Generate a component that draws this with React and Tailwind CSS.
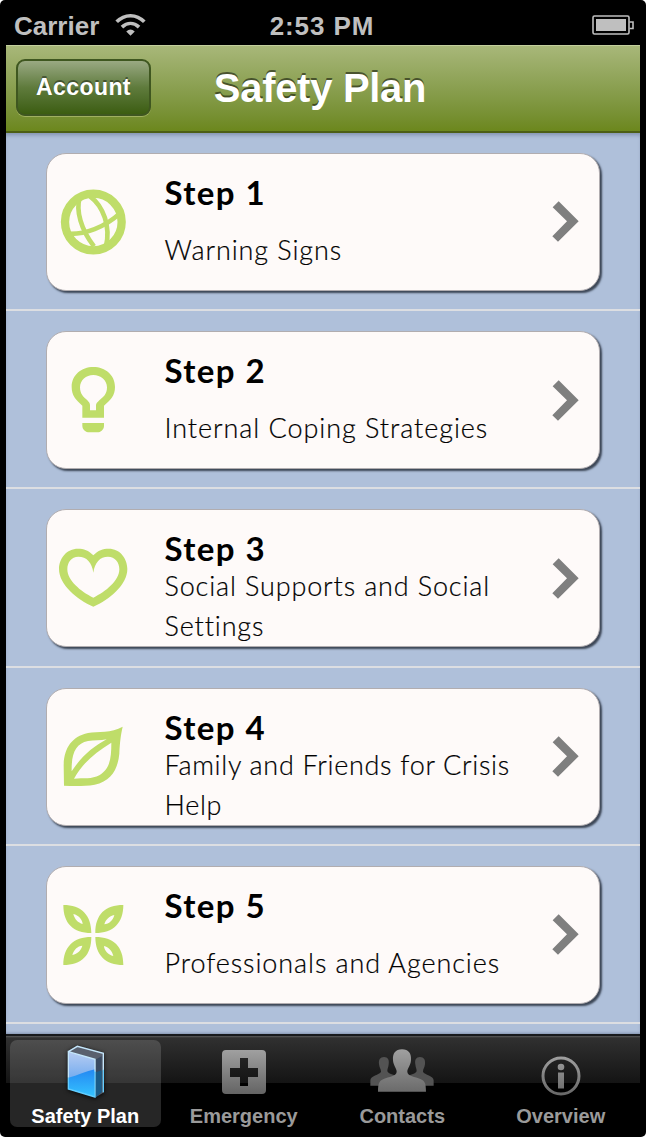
import React from "react";

const steps = [
  { title: "Step 1", text: "Warning Signs", icon: GlobeIcon, tracking: "tracking-[0.9px]" },
  { title: "Step 2", text: "Internal Coping Strategies", icon: BulbIcon, tracking: "tracking-[0.94px]" },
  { title: "Step 3", text: "Social Supports and Social Settings", icon: HeartIcon, tracking: "tracking-[0.86px]" },
  { title: "Step 4", text: "Family and Friends for Crisis Help", icon: LeafIcon, tracking: "tracking-[0.7px]" },
  { title: "Step 5", text: "Professionals and Agencies", icon: FlowerIcon, tracking: "tracking-[0.9px]" },
];

const tabs = [
  { label: "Safety Plan", icon: BookIcon, active: true, iconBox: "pt-[5px] pl-px" },
  { label: "Emergency", icon: CrossIcon, iconBox: "pt-[3px]" },
  { label: "Contacts", icon: PeopleIcon, iconBox: "pt-[2px]" },
  { label: "Overview", icon: InfoIcon, iconBox: "pt-[11px]" },
];

function GlobeIcon() {
  return (
    <svg viewBox="0 0 210 210" className="size-[70px]" fill="none" stroke="#bfdd69">
      <circle cx="106" cy="105" r="85" strokeWidth="25" />
      <g strokeWidth="14">
        <path d="M66 30C52 70 70 130 108 178" />
        <path d="M96 28C137 58 158 120 144 178" />
        <path d="M24 140C80 145 142 120 188 77" />
      </g>
    </svg>
  );
}

function BulbIcon() {
  return (
    <svg viewBox="0 0 210 210" className="size-[70px]" fill="#bfdd69" fillRule="evenodd">
      <path d="M106 6C142 6 171 30 171 66C171 92 158 105 138 122V158H73V122C54 105 41 92 41 66C41 30 70 6 106 6ZM106 30C84 30 66 46 66 67C66 88 78 97 88 106C94 112 96 116 96 121V136H114V121C114 116 118 112 124 106C136 96 147 88 147 67C147 46 128 30 106 30Z" />
      <path d="M73 174H138V182C138 194 128 202 118 202H94C83 202 73 194 73 182Z" />
    </svg>
  );
}

function HeartIcon() {
  return (
    <svg viewBox="0 0 210 210" className="size-[70px]" fill="#bfdd69" fillRule="evenodd">
      <path d="M106 37C120 22 135 17 152 17C186 17 208 46 208 78C208 125 155 170 106 191C57 170 3 125 3 78C3 46 26 17 60 17C77 17 92 22 106 37ZM106 89C102 58 86 41 61 41C40 41 28 58 28 79C28 112 68 146 106 164C144 146 184 112 184 79C184 58 171 41 150 41C126 41 110 58 106 89Z" />
    </svg>
  );
}

function LeafIcon() {
  return (
    <svg viewBox="0 0 210 210" className="size-[70px]" fill="#bfdd69" fillRule="evenodd">
      <path d="M194 14C160 34 120 28 90 33C40 44 18 80 17 130L18 191C50 193 80 193 110 188C160 178 180 140 184 95C186 60 188 40 194 14ZM41 148C40 95 52 65 90 57C108 54 128 56 146 52C104 76 72 100 41 148ZM48 170C76 120 112 92 160 62C160 110 156 140 124 160C102 172 76 168 48 170Z" />
    </svg>
  );
}

function FlowerIcon() {
  const petal = "M16 15C70 15 100 45 100 99C45 99 16 70 16 15ZM46 42C62 46 73 58 74 72C60 68 50 58 46 42Z";
  return (
    <svg viewBox="0 0 210 210" className="size-[70px]" fill="#bfdd69" fillRule="evenodd">
      <path d={petal} />
      <path d={petal} transform="rotate(90 106 105)" />
      <path d={petal} transform="rotate(180 106 105)" />
      <path d={petal} transform="rotate(270 106 105)" />
    </svg>
  );
}

function BookIcon() {
  return (
    <svg viewBox="0 0 120 165" className="h-[55px] w-[40px] drop-shadow-[0_1px_2px_rgba(0,0,0,0.8)]">
      <defs>
        <linearGradient id="cover" x1="0" y1="0" x2="0" y2="1">
          <stop offset="0" stopColor="#b7ccf2" />
          <stop offset="0.55" stopColor="#78aeef" />
        </linearGradient>
        <linearGradient id="shine" x1="0" y1="0" x2="0" y2="1">
          <stop offset="0" stopColor="#2488f2" />
          <stop offset="1" stopColor="#35c4ff" />
        </linearGradient>
      </defs>
      <path d="M7 18L34 3L114 25V142L90 156L7 132Z" fill="#59606e" />
      <path d="M90 43L107 34V142L90 156Z" fill="#3a4a60" />
      <path d="M90 82L107 76V142L90 156Z" fill="#1a5c88" />
      <path d="M7 20L87 43V156L7 132Z" fill="url(#cover)" />
      <path d="M7 98C35 92 60 78 87 73V156L7 132Z" fill="url(#shine)" />
      <path d="M7 20L34 4L112 25V76M7 98V20L87 43V80" fill="none" stroke="#c4e6fb" strokeWidth="4" />
      <path d="M7 98V132L87 156V78M112 74V142" fill="none" stroke="#62cdff" strokeWidth="4" />
    </svg>
  );
}

function CrossIcon() {
  return (
    <svg viewBox="0 0 44 44" className="size-[44px]">
      <defs>
        <linearGradient id="cross" x1="0" y1="0" x2="0" y2="1">
          <stop offset="0" stopColor="#a0a0a0" />
          <stop offset="1" stopColor="#646464" />
        </linearGradient>
      </defs>
      <path fill="url(#cross)" fillRule="evenodd" d="M4 0H40Q44 0 44 4V40Q44 44 40 44H4Q0 44 0 40V4Q0 0 4 0ZM18 8V18H8V27H18V36H26V27H36V18H26V8Z" />
    </svg>
  );
}

function PeopleIcon() {
  return (
    <svg viewBox="0 0 192 130" className="h-[43.3px] w-[64px]">
      <defs>
        <linearGradient id="person" x1="0" y1="0" x2="0" y2="1">
          <stop offset="0" stopColor="#a0a0a0" />
          <stop offset="1" stopColor="#6b6b6b" />
        </linearGradient>
      </defs>
      <g fill="#535353">
        <path d="M42 24C54 24 58 33 56 46C55 56 52 60 52 66C54 75 70 76 80 82V110H1V94C1 80 28 78 33 68C33 60 28 56 27 46C25 33 30 24 42 24Z" />
        <path d="M150 24C138 24 134 33 136 46C137 56 140 60 140 66C138 75 122 76 112 82V110H191V94C191 80 164 78 159 68C159 60 164 56 165 46C167 33 162 24 150 24Z" />
      </g>
      <path d="M96 1C116 1 125 14 123 34C122 50 112 58 112 68C112 82 136 83 151 90C164 96 168 102 168 128H24C24 102 28 96 41 90C56 83 80 82 80 68C80 58 70 50 69 34C67 14 76 1 96 1Z" fill="url(#person)" />
    </svg>
  );
}

function InfoIcon() {
  return (
    <svg viewBox="0 0 40 40" className="size-[40px]">
      <defs>
        <linearGradient id="info" gradientUnits="userSpaceOnUse" x1="0" y1="0" x2="0" y2="40">
          <stop offset="0" stopColor="#a0a0a0" />
          <stop offset="1" stopColor="#666666" />
        </linearGradient>
      </defs>
      <circle cx="20" cy="20" r="18" fill="none" stroke="url(#info)" strokeWidth="3" />
      <circle cx="20" cy="11" r="3.3" fill="url(#info)" />
      <path d="M17 16.5H23V32.5H17Z" fill="url(#info)" />
    </svg>
  );
}

function StatusBar() {
  return (
    <div className="grid h-[45px] grid-cols-3 items-center pt-1.5 pr-3 pl-3.5 text-[26px] leading-none font-bold text-[#bfbfbf]">
      <div className="flex items-center gap-4">
        <span>Carrier</span>
        <svg viewBox="0 0 92 70" className="mb-0.5 h-[23px] w-[31px]" fill="none" stroke="#bfbfbf" strokeWidth="11">
          <path d="M4 27C28 2 64 2 88 27" />
          <path d="M20 43C36 28 56 28 72 43" />
          <path d="M46 69L33 56Q46 44 59 56Z" fill="#bfbfbf" stroke="none" />
        </svg>
      </div>
      <span className="-mr-1 -ml-2 text-center tracking-[0.9px]">2:53 PM</span>
      <svg viewBox="0 0 42 20" className="mb-0.5 h-[20px] w-[42px] justify-self-end">
        <rect x="1" y="1" width="36" height="18" rx="1.5" fill="none" stroke="#bfbfbf" strokeWidth="1.6" />
        <path d="M4 4H34V16H4Z" fill="#bfbfbf" />
        <path d="M37.5 7H41V13.5H37.5" fill="none" stroke="#bfbfbf" strokeWidth="1.6" />
      </svg>
    </div>
  );
}

function NavBar() {
  return (
    <div className="grid h-[87.75px] grid-cols-[135px_1fr_135px] items-center border-t border-b-2 border-t-[#c3cf9d] border-b-[#4c5e14] bg-linear-to-b from-[#a8b779] to-[#6c871c] px-[10px] text-white">
      <button className="mb-0.5 h-[57px] rounded-[9px] border-2 border-[#3f5720] bg-linear-to-b from-[#9aa983] via-[#5f7b3c] to-[#3c5d10] text-[23px] font-bold tracking-[0.4px] shadow-[0_1px_0_#a0b060] [text-shadow:0_-2px_0_rgba(0,0,0,0.4)]">
        Account
      </button>
      <h1 className="-ml-1.5 text-center text-[40px] leading-none font-bold tracking-[-0.3px] [text-shadow:0_-2px_0_rgba(0,0,0,0.5)]">
        Safety Plan
      </h1>
    </div>
  );
}

function StepRow({ step }) {
  const Icon = step.icon;
  return (
    <li className="h-[178.25px] border-b-2 border-[#dcdee2] px-10 pt-5">
      <div className="flex h-[138px] w-[554px] items-center rounded-[20px] border border-[#b1adb0] bg-[#fefaf9] pr-5 pl-[11px] font-['Lato',sans-serif] text-black shadow-[2px_2px_2px_#3c4656]">
        <Icon />
        <div className="ml-9 h-full flex-1 pt-[18px] pl-[0.5px]">
          <h2 className="text-[33px] leading-10 font-bold tracking-[1.4px]">{step.title}</h2>
          <div className="-mt-0.5 flex h-20 w-[370px] items-center">
            <p className={`text-[27px] leading-10 font-light [-webkit-text-stroke:0.2px_#000] ${step.tracking}`}>
              {step.text}
            </p>
          </div>
        </div>
        <svg viewBox="0 0 81 123" className="h-[41px] w-[27px]" fill="#7f7f7f">
          <path d="M2 19L20 1L80 61L18 122L1 106L45 61Z" />
        </svg>
      </div>
    </li>
  );
}

function TabBar() {
  return (
    <div className="grid h-[103px] shrink-0 grid-cols-4 border-t-2 border-[#17191c] bg-[linear-gradient(#5a5a5a_0px,#303030_2px,#141414_47px,#000_47px)]">
      {tabs.map((tab) => {
        const Icon = tab.icon;
        return (
          <div
            key={tab.label}
            className={`mx-1 mt-1 flex h-[87px] flex-col items-center rounded-[7px] ${tab.active ? "bg-white/15 text-white" : "text-[#9a9a9a]"}`}
          >
            <div className={`flex h-[60px] shrink-0 items-center justify-center ${tab.iconBox}`}>
              <Icon />
            </div>
            <span className="mt-1 shrink-0 text-[20px] leading-6 font-bold whitespace-nowrap">{tab.label}</span>
          </div>
        );
      })}
    </div>
  );
}

function App() {
  return (
    <div className="h-[1137px] w-[646px] bg-white">
      <div className="flex h-full flex-col overflow-hidden rounded-[5px] bg-black font-['Liberation_Sans',Arial,sans-serif]">
        <StatusBar />
        <div className="mx-1.5 flex min-h-0 flex-1 flex-col">
          <NavBar />
          <ul className="min-h-0 flex-1 overflow-hidden bg-[#afc0da] shadow-[inset_0_4px_4px_-2px_#8090ac,inset_0_-3px_3px_-2px_#8090ac]">
            {steps.map((step) => (
              <StepRow key={step.title} step={step} />
            ))}
          </ul>
          <TabBar />
        </div>
      </div>
    </div>
  );
}

export default App;
